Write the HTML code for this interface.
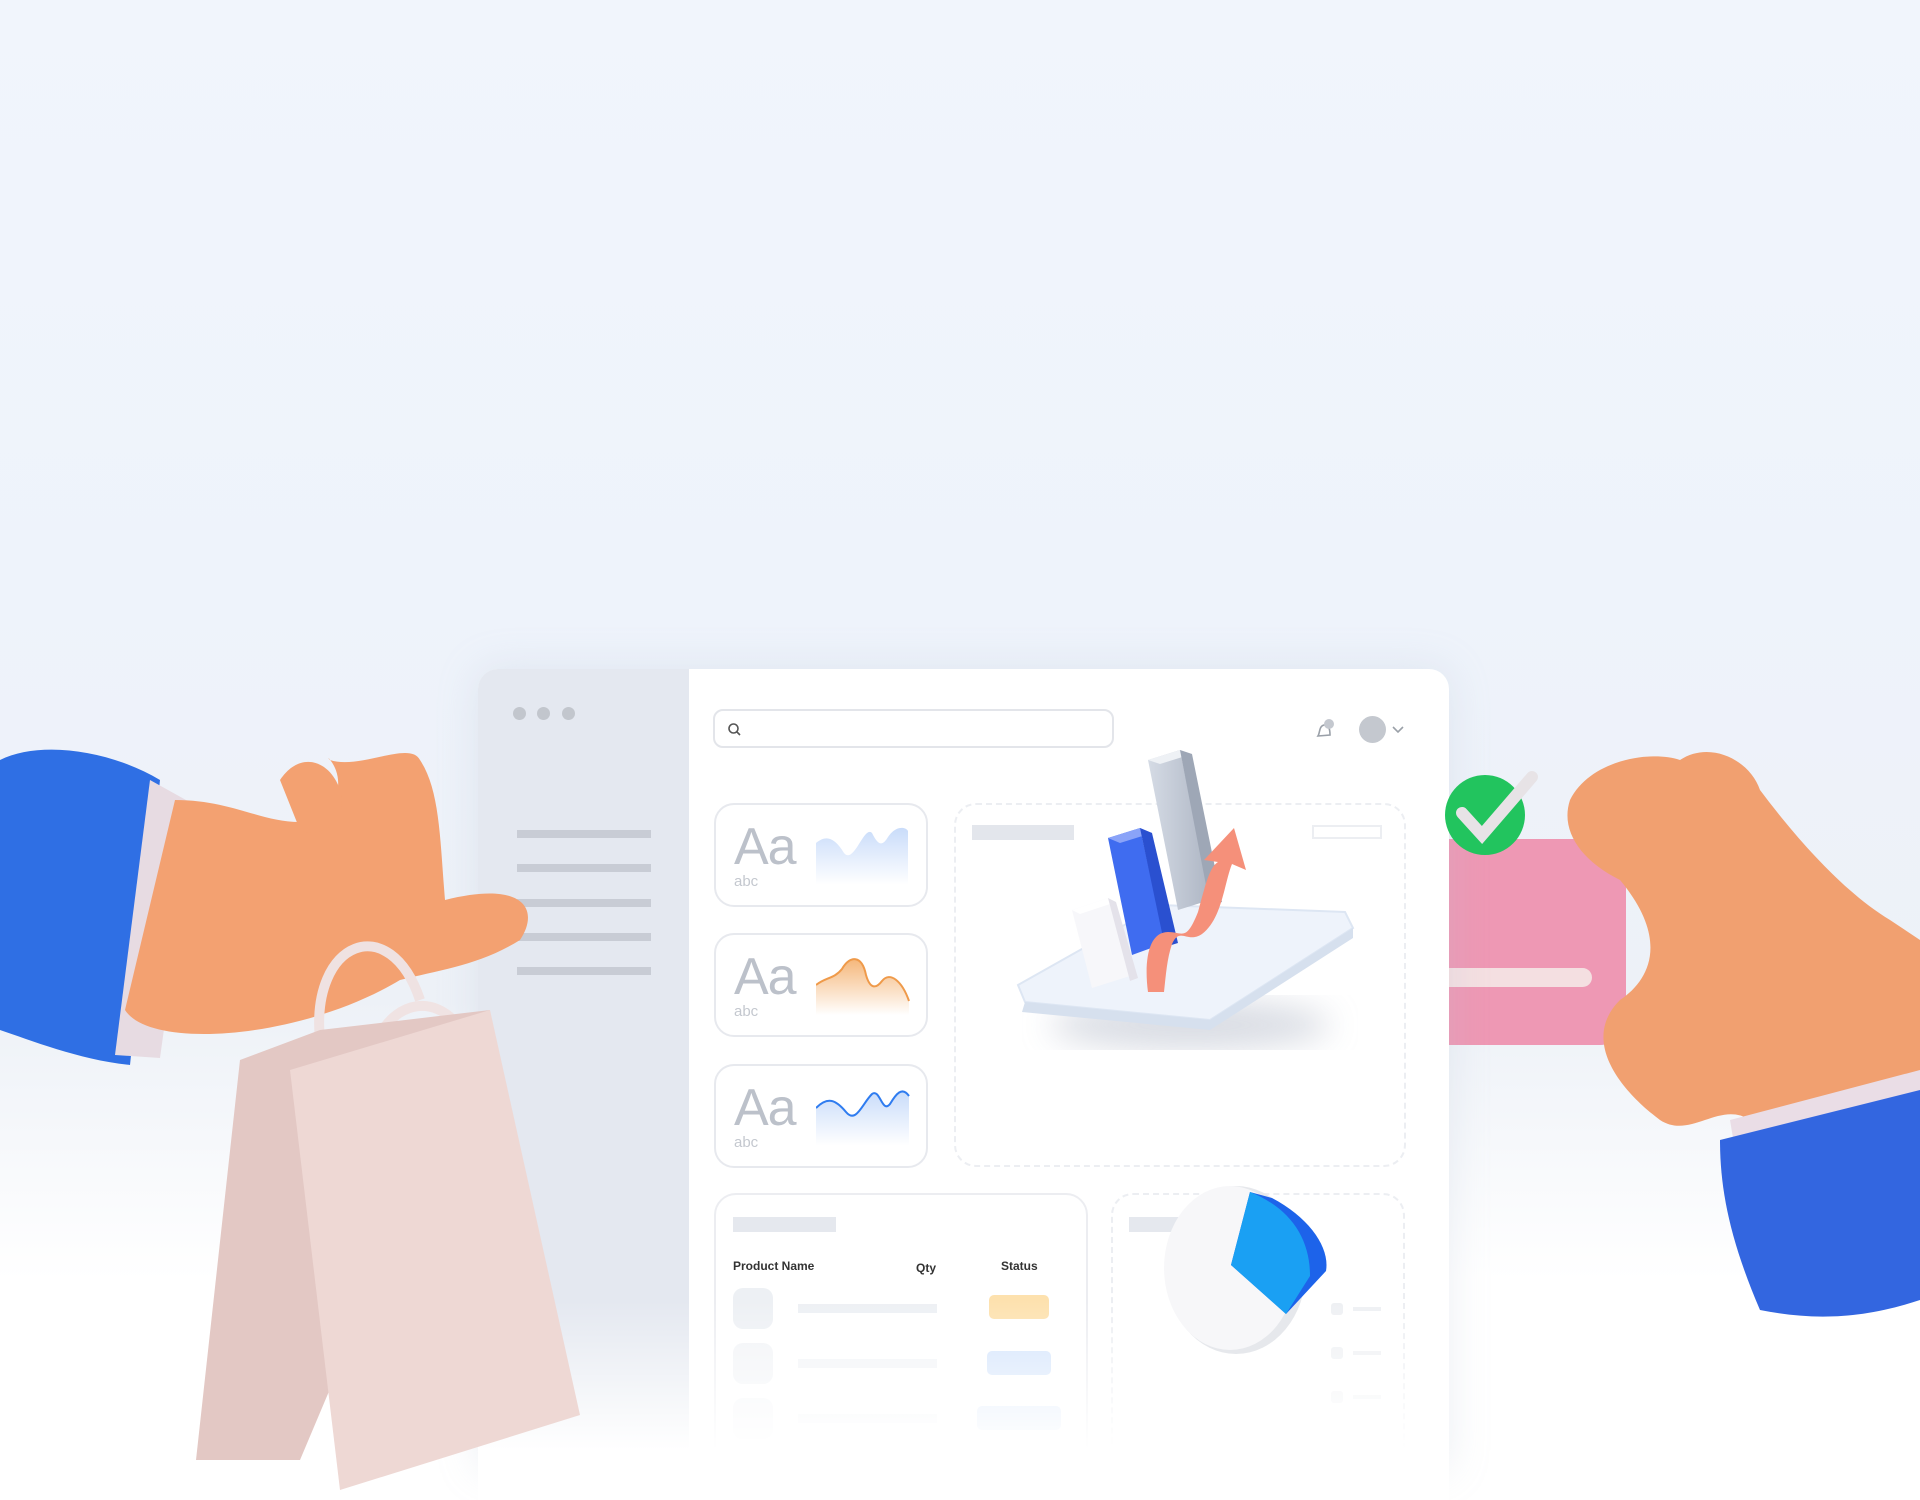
<!DOCTYPE html>
<html><head><meta charset="utf-8"><style>
*{margin:0;padding:0;box-sizing:border-box}
body{width:1920px;height:1500px;overflow:hidden;position:relative;font-family:"Liberation Sans",sans-serif;background:linear-gradient(#f1f5fc 0px,#eef3fb 600px,#edf1f7 1000px,#fff 1280px)}
.abs{position:absolute}
.dash{position:absolute;left:478px;top:669px;width:971px;height:800px;background:#fff;border-radius:20px 20px 0 0;overflow:hidden;box-shadow:0 0 40px rgba(180,190,210,.25);z-index:2}
.side{position:absolute;left:0;top:0;width:211px;height:100%;background:#e4e8f0}
.dot{position:absolute;top:38px;width:13px;height:13px;border-radius:50%;background:#c2c6cd}
.sl{position:absolute;left:39px;width:134px;height:8px;background:#c8ccd5}
.card{position:absolute;left:236px;width:214px;height:104px;border:2px solid #e7e9ee;border-radius:20px;background:#fff}
.card .aa{position:absolute;left:18px;top:12px;font-size:52px;color:#bcc1ca;letter-spacing:-1px}
.card .abc{position:absolute;left:18px;top:68px;font-size:15px;color:#c4c8cf}
.card svg{position:absolute;left:100px;top:20px}
.fade{position:absolute;left:478px;top:1300px;width:971px;height:200px;background:linear-gradient(rgba(255,255,255,0),#fff 75%);z-index:3}
</style></head><body>
<div class="abs" style="left:1420px;top:839px;width:206px;height:206px;border-radius:26px;background:#ee98b4;z-index:1"></div>
<div class="abs" style="left:1430px;top:968px;width:162px;height:19px;border-radius:10px;background:#f4dfe1;z-index:1"></div>
<div class="dash">
 <div class="side">
  <div class="dot" style="left:35px"></div><div class="dot" style="left:59px"></div><div class="dot" style="left:84px"></div>
  <div class="sl" style="top:161px"></div><div class="sl" style="top:195px"></div><div class="sl" style="top:230px"></div><div class="sl" style="top:264px"></div><div class="sl" style="top:298px"></div>
 </div>
 <div class="abs" style="left:235px;top:40px;width:401px;height:39px;border:2px solid #e3e5ea;border-radius:10px">
  <svg class="abs" style="left:12px;top:11px" width="16" height="16" viewBox="0 0 16 16"><circle cx="6.5" cy="6.5" r="4.5" fill="none" stroke="#555" stroke-width="1.6"/><path d="M10 10l3 3" stroke="#555" stroke-width="1.6"/></svg>
 </div>
 <svg class="abs" style="left:832px;top:45px" width="30" height="30" viewBox="0 0 30 30"><path d="M8 22c2-3 1-10 6-11s6 5 6 10z" fill="none" stroke="#9aa0a8" stroke-width="1.6"/><circle cx="19" cy="10" r="5" fill="#c4c8cf"/></svg>
 <div class="abs" style="left:881px;top:47px;width:27px;height:27px;border-radius:50%;background:#c4c8cf"></div>
 <svg class="abs" style="left:914px;top:57px" width="12" height="8"><path d="M1 1l5 5 5-5" fill="none" stroke="#9aa0a8" stroke-width="1.6"/></svg>

 <div class="card" style="top:134px"><div class="aa">Aa</div><div class="abc">abc</div>
  <svg width="95" height="60" viewBox="0 0 95 60"><defs><linearGradient id="gb" x1="0" y1="0" x2="0" y2="1"><stop offset="0" stop-color="#c9dcfa"/><stop offset="1" stop-color="#fff"/></linearGradient></defs><path d="M0 18C10 10 18 12 28 28 38 40 48 0 56 8 62 20 66 22 72 12 80 0 90 2 92 6V60H0Z" fill="url(#gb)"/></svg></div>
 <div class="card" style="top:264px"><div class="aa">Aa</div><div class="abc">abc</div>
  <svg width="95" height="60" viewBox="0 0 95 60"><defs><linearGradient id="go" x1="0" y1="0" x2="0" y2="1"><stop offset="0" stop-color="#f5b77b"/><stop offset="1" stop-color="#fff"/></linearGradient></defs><path d="M0 30C10 22 18 24 26 14 34 0 46 0 50 20 54 34 60 34 66 26 74 16 86 26 93 46V60H0Z" fill="url(#go)"/><path d="M0 30C10 22 18 24 26 14 34 0 46 0 50 20 54 34 60 34 66 26 74 16 86 26 93 46" fill="none" stroke="#ef9a4a" stroke-width="2"/></svg></div>
 <div class="card" style="top:395px"><div class="aa">Aa</div><div class="abc">abc</div>
  <svg width="95" height="60" viewBox="0 0 95 60"><path d="M0 22C12 10 20 14 30 26 40 38 46 18 56 8 64 2 66 28 74 18 80 8 86 0 93 10V60H0Z" fill="url(#gb)"/><path d="M0 22C12 10 20 14 30 26 40 38 46 18 56 8 64 2 66 28 74 18 80 8 86 0 93 10" fill="none" stroke="#2f7cf0" stroke-width="2"/></svg></div>

 <div class="abs" style="left:476px;top:134px;width:452px;height:364px;border:2px dashed #eceef2;border-radius:22px">
  <div class="abs" style="left:16px;top:20px;width:102px;height:15px;background:#e3e6ec"></div>
  <div class="abs" style="left:356px;top:20px;width:70px;height:14px;border:2px solid #eceef2"></div>
 </div>
 <div class="abs" style="left:236px;top:524px;width:374px;height:300px;border:2px solid #ecedf1;border-radius:22px">
  <div class="abs" style="left:17px;top:22px;width:103px;height:15px;background:#e5e8ee"></div>
  <div class="abs" style="left:17px;top:64px;font-size:12px;font-weight:bold;color:#333">Product Name</div>
  <div class="abs" style="left:200px;top:66px;font-size:12px;font-weight:bold;color:#333">Qty</div>
  <div class="abs" style="left:285px;top:64px;font-size:12px;font-weight:bold;color:#333">Status</div>
  <div class="abs" style="left:17px;top:93px;width:40px;height:41px;border-radius:10px;background:#edf0f4"></div>
  <div class="abs" style="left:82px;top:109px;width:139px;height:9px;background:#edf0f4"></div>
  <div class="abs" style="left:273px;top:100px;width:60px;height:24px;border-radius:5px;background:#fde1ae"></div>
  <div class="abs" style="left:17px;top:148px;width:40px;height:41px;border-radius:10px;background:#f1f3f6"></div>
  <div class="abs" style="left:82px;top:164px;width:139px;height:9px;background:#f1f3f6"></div>
  <div class="abs" style="left:271px;top:156px;width:64px;height:24px;border-radius:5px;background:#d2e3fc"></div>
  <div class="abs" style="left:17px;top:203px;width:40px;height:41px;border-radius:10px;background:#f4f5f8"></div>
  <div class="abs" style="left:82px;top:219px;width:139px;height:9px;background:#f4f5f8"></div>
  <div class="abs" style="left:261px;top:211px;width:84px;height:24px;border-radius:5px;background:#dde9fc"></div>
 </div>
 <div class="abs" style="left:633px;top:524px;width:294px;height:300px;border:2px dashed #eceef2;border-radius:22px">
  <div class="abs" style="left:16px;top:22px;width:50px;height:15px;background:#e5e8ee"></div>
  <div class="abs" style="left:218px;top:108px;width:12px;height:12px;border-radius:3px;background:#eef0f3"></div><div class="abs" style="left:240px;top:112px;width:28px;height:4px;background:#eef0f3"></div>
  <div class="abs" style="left:218px;top:152px;width:12px;height:12px;border-radius:3px;background:#eef0f3"></div><div class="abs" style="left:240px;top:156px;width:28px;height:4px;background:#eef0f3"></div>
  <div class="abs" style="left:218px;top:196px;width:12px;height:12px;border-radius:3px;background:#f2f3f5"></div><div class="abs" style="left:240px;top:200px;width:28px;height:4px;background:#f2f3f5"></div>
 </div>
</div>
<div class="fade"></div>

<svg class="abs" style="left:1000px;top:740px;z-index:4" width="370" height="310" viewBox="0 0 370 310">
 <defs><filter id="sh"><feGaussianBlur stdDeviation="16"/></filter>
 <linearGradient id="gr" x1="0" y1="0" x2="1" y2="0"><stop offset="0" stop-color="#d5dbe5"/><stop offset="1" stop-color="#aeb6c4"/></linearGradient></defs>
 <ellipse cx="190" cy="285" rx="140" ry="25" fill="#c9ced8" filter="url(#sh)" opacity=".7"/>
 <path d="M18 245L160 165 345 172 353 188 210 280 25 262Z" fill="#eef3fb" stroke="#dde6f3" stroke-width="2"/>
 <path d="M25 262L210 280 353 188 353 198 210 290 22 272Z" fill="#d6e0ee"/>
 <path d="M148 20l32-10 30 150-32 10z" fill="url(#gr)"/><path d="M148 20l32-10 12 4-32 10z" fill="#eef1f5"/><path d="M180 10l12 4 30 148-12 4z" fill="#9ea7b6"/>
 <path d="M108 98l32-10 25 115-33 12z" fill="#3f6cf0"/><path d="M108 98l32-10 12 5-32 10z" fill="#8aa3f8"/><path d="M140 88l12 5 26 110-13 4z" fill="#2a50d0"/>
 <path d="M72 170l36-12 22 78-38 12z" fill="#f7f7fa"/><path d="M72 170l36-12 8 4-36 12z" fill="#fff"/><path d="M108 158l8 4 22 76-8 3z" fill="#e4e2ea"/>
 <path d="M148 252c-4-30 0-60 20-60 15 0 18 10 30-20 8-30 12-45 20-50l-14-2 30-32 12 42-14-6c-8 20-10 55-30 70-15 10-22-8-30 10-5 15-6 30-8 48z" fill="#f5907a"/>
</svg>

<svg class="abs" style="left:1160px;top:1178px;z-index:4" width="175" height="180" viewBox="0 0 175 180">
 <ellipse cx="76" cy="92" rx="70" ry="84" fill="#e6e8ec"/>
 <ellipse cx="70" cy="90" rx="66" ry="82" fill="#f7f7f9"/>
 <path d="M71 87L90 14 112 20C150 40 170 70 166 93L126 136z" fill="#1d63ea"/>
 <path d="M71 87L90 14C130 30 150 60 150 98L126 136z" fill="#1aa0f3"/>
</svg>

<svg class="abs" style="left:1440px;top:755px;z-index:5" width="110" height="115" viewBox="0 0 110 115"><circle cx="45" cy="60" r="40" fill="#22c45e"/><path d="M22 58l20 22 50-58" fill="none" stroke="#e7e3e6" stroke-width="12" stroke-linecap="round"/></svg>

<svg class="abs" style="left:0;top:740px;z-index:5" width="560" height="340" viewBox="0 0 560 340">
 <path d="M0 20C40 0 110 10 160 40L130 325C80 320 30 300 0 290Z" fill="#2f6fe4"/>
 <path d="M150 40L195 65 160 318 115 315Z" fill="#e7dbe2"/>
 <path d="M175 60C240 60 270 90 320 80 360 40 320 10 330 20 360 30 410 0 420 20 440 50 440 100 445 160 525 140 540 170 520 200 480 225 440 230 400 240 300 300 150 310 125 270 140 200 175 60Z" fill="#f3a171"/>
 <path d="M280 40c20-30 50-20 60 10 10 30-20 50-40 40z" fill="#f3a171"/>
</svg>
<svg class="abs" style="left:190px;top:900px;z-index:6" width="400" height="600" viewBox="0 0 400 600">
 <path d="M130 140C120 40 200 10 230 100" fill="none" stroke="#efe2e2" stroke-width="10"/>
 <path d="M175 210C170 80 280 70 290 190" fill="none" stroke="#f0e3e3" stroke-width="10"/>
 <path d="M50 160L130 130 300 110 110 560 6 560Z" fill="#e3c8c4"/>
 <path d="M100 170L300 110 390 515 150 590Z" fill="#eed8d4"/>
</svg>
<svg class="abs" style="left:1560px;top:740px;z-index:6" width="360" height="580" viewBox="0 0 360 580">
 <path d="M10 60C30 20 90 10 120 20 150 0 190 20 200 50 230 90 280 150 330 180L360 200V340L190 380C160 360 130 400 100 380 60 350 20 300 60 260 90 240 110 200 60 140 20 120 0 90 10 60Z" fill="#f1a070"/>
 <path d="M170 380L360 330V380L175 410Z" fill="#eadde6"/>
 <path d="M160 400L360 350V560C300 580 250 580 200 570 170 500 160 450 160 400Z" fill="#3366e0"/>
</svg>
</body></html>
